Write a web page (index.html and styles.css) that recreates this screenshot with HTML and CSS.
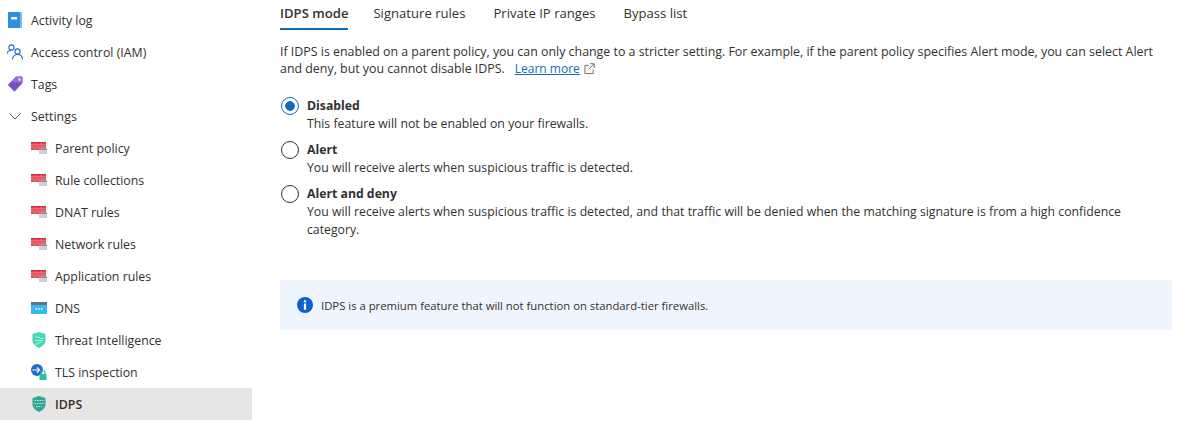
FILE: index.html
```html
<!DOCTYPE html>
<html lang="en">

<head>
    <meta charset="UTF-8">
    <meta name="viewport" content="width=device-width, initial-scale=1.0">
    <title>IDPS</title>
    <link rel="stylesheet" href="styles.css">
</head>

<body>
    <svg class="defs" width="0" height="0">
        <symbol id="firewall" viewBox="0 0 16 12">
            <rect x="0" y="0" width="15" height="8" fill="#e8505c"/>
            <path d="M0 0h15v1.500H0z" fill="#d8323f"/>
            <path d="M0 2.500h15M0 5.200h15M4 0v2.500M10 0v2.500M7 2.500v2.700M12 2.500v2.700M4 5.200v2.800M10 5.200v2.800" stroke="#f7a3aa" stroke-width=".6" stroke-opacity=".55" fill="none"/>
            <rect x="8" y="6.500" width="8" height="5.500" fill="#d0d0d0"/>
            <rect x="8" y="6.500" width="8" height="1.500" fill="#8f8f8f"/>
        </symbol>
    </svg>

    <nav class="sidebar">
        <a class="item">
            <svg class="icon" viewBox="0 0 16 16"><rect x="1" y="0" width="14" height="16" rx="1.500" fill="#79b8ec"/><rect x="1" y="0" width="12" height="16" rx="1" fill="#2f8fdf"/><rect x="4" y="5" width="6" height="2.500" fill="#fff"/></svg>
            <span>Activity log</span>
        </a>
        <a class="item">
            <svg class="icon" viewBox="0 0 16 16" fill="none" stroke="#1a6fd0" stroke-width="1.100"><circle cx="4.500" cy="3.500" r="2.600"/><path d="M0 10c0-2.500 1.500-3.500 4.500-3.500"/><circle cx="10.500" cy="7.500" r="2.600"/><path d="M5.500 15.500c0-3 2-5 5-5s5 2 5 5"/></svg>
            <span>Access control (IAM)</span>
        </a>
        <a class="item">
            <svg class="icon" viewBox="0 0 16 16"><path d="M9 .5h5.500a1 1 0 0 1 1 1v5.500L7.500 15.800 .8 9z" fill="#7b4fc4"/><path d="M9 .5h5.500a1 1 0 0 1 1 1v5.500L4 5.500z" fill="#a27be0" opacity=".8"/><circle cx="12.500" cy="3.500" r="1.300" fill="#e6dcf6"/></svg>
            <span>Tags</span>
        </a>
        <a class="item">
            <svg class="icon chevron" viewBox="0 0 16 16" fill="none" stroke="#555" stroke-width="1"><path d="M2.500 5.500 8 11l5.500-5.500"/></svg>
            <span>Settings</span>
        </a>
        <a class="item sub"><svg class="icon"><use href="#firewall"/></svg><span>Parent policy</span></a>
        <a class="item sub"><svg class="icon"><use href="#firewall"/></svg><span>Rule collections</span></a>
        <a class="item sub"><svg class="icon"><use href="#firewall"/></svg><span>DNAT rules</span></a>
        <a class="item sub"><svg class="icon"><use href="#firewall"/></svg><span>Network rules</span></a>
        <a class="item sub"><svg class="icon"><use href="#firewall"/></svg><span>Application rules</span></a>
        <a class="item sub">
            <svg class="icon" viewBox="0 0 16 12"><rect width="16" height="12" rx=".8" fill="#35b8ee"/><rect width="16" height="3" fill="#5f7482"/><path d="M4.500 7h1.500M7.200 7h1.500M10 7h1.500" stroke="#fff" stroke-width="1.500"/></svg>
            <span>DNS</span>
        </a>
        <a class="item sub">
            <svg class="icon" viewBox="0 0 16 16"><path d="M8 0 14.500 2v6.500c0 3.500-3.500 6-6.500 7.500-3-1.500-6.500-4-6.500-7.500V2z" fill="#46d6b8"/><path d="M4 5h4l1.500 1.500H12M4 8.500h8M4 12h3l2-2h2" stroke="#d9f7f0" stroke-width=".8" fill="none"/></svg>
            <span>Threat Intelligence</span>
        </a>
        <a class="item sub">
            <svg class="icon" viewBox="0 0 16 16"><circle cx="6" cy="6" r="6" fill="#1f6fd0"/><path d="M1.500 6h7M6 3.500 8.500 6 6 8.500" stroke="#fff" stroke-width="1.200" fill="none"/><path d="M10 10V8.500a2 2 0 0 1 4 0V10" stroke="#2cc1a5" stroke-width="1.100" fill="none"/><rect x="8.500" y="10" width="7" height="6" rx=".6" fill="#2cc1a5"/></svg>
            <span>TLS inspection</span>
        </a>
        <a class="item sub selected">
            <svg class="icon" viewBox="0 0 16 16"><path d="M8 0 14.500 2v6.500c0 3.500-3.500 6-6.500 7.500-3-1.500-6.500-4-6.500-7.500V2z" fill="#2fa893"/><path d="M3.500 4.500h9M3.500 7.500h9M5 10.500h6" stroke="#bfe9df" stroke-width="1" stroke-dasharray="1.500 1" fill="none"/></svg>
            <span>IDPS</span>
        </a>
    </nav>

    <main class="content">
        <div class="tabs">
            <a class="tab active">IDPS mode</a>
            <a class="tab">Signature rules</a>
            <a class="tab">Private IP ranges</a>
            <a class="tab">Bypass list</a>
        </div>

        <div class="intro">
            <div>If IDPS is enabled on a parent policy, you can only change to a stricter setting. For example, if the parent policy specifies Alert mode, you can select Alert</div>
            <div class="intro-line">
                <span>and deny, but you cannot disable IDPS.</span>
                <a class="link">Learn more</a>
                <svg class="external" viewBox="0 0 12 12" fill="none" stroke="#555" stroke-width=".9"><path d="M5 2.500H1v9h9V7M6.500 .8h4.700v4.700M11 1 5 7"/></svg>
            </div>
        </div>

        <div class="options">
            <div class="option">
                <span class="radio checked"></span>
                <div>
                    <div class="option-title">Disabled</div>
                    <div class="option-text">This feature will not be enabled on your firewalls.</div>
                </div>
            </div>
            <div class="option">
                <span class="radio"></span>
                <div>
                    <div class="option-title">Alert</div>
                    <div class="option-text">You will receive alerts when suspicious traffic is detected.</div>
                </div>
            </div>
            <div class="option">
                <span class="radio"></span>
                <div>
                    <div class="option-title">Alert and deny</div>
                    <div class="option-text">You will receive alerts when suspicious traffic is detected, and that traffic will be denied when the matching signature is from a high confidence category.</div>
                </div>
            </div>
        </div>

        <div class="banner">
            <svg class="info" viewBox="0 0 16 16"><circle cx="8" cy="8" r="8" fill="#0f5fd0"/><circle cx="8" cy="4.300" r="1.200" fill="#fff"/><rect x="6.900" y="6.500" width="2.200" height="6.200" fill="#fff"/></svg>
            <span>IDPS is a premium feature that will not function on standard-tier firewalls.</span>
        </div>
    </main>
</body>

</html>
```

FILE: styles.css
```css
body {
    font-family: "Open Sans", "Noto Sans", Arial, sans-serif;
    font-size: 12.25px;
    color: #323130;
    background-color: #ffffff;
    display: flex;
    margin: 0;
    height: 423px;
    overflow: hidden;
}

.defs {
    position: absolute;
}

.sidebar {
    width: 252px;
    flex-shrink: 0;
    padding-top: 4px;
    font-size: 12.35px;
}

.item {
    display: flex;
    align-items: center;
    height: 32px;
    padding-left: 7px;
}

.item .icon {
    width: 16px;
    height: 16px;
    margin-right: 8px;
    flex-shrink: 0;
}

.item.sub {
    padding-left: 31px;
}

.item.selected {
    background-color: #e8e6e4;
    font-weight: 600;
}

.content {
    width: 892px;
    margin-left: 28px;
}

.tabs {
    display: flex;
    gap: 25px;
    height: 30px;
}

.tab {
    font-size: 13.1px;
    line-height: 26px;
    height: 30px;
    box-sizing: border-box;
}

.tab + .tab + .tab {
    margin-left: 3px;
}

.tab.active {
    font-weight: 600;
    border-bottom: 2px solid #0f6cbd;
}

.intro {
    margin: 13px 0 0;
    line-height: 17px;
    font-size: 12.4px;
}

.intro-line {
    display: flex;
    align-items: center;
}

.link {
    color: #0f6cbd;
    text-decoration: underline;
    font-size: 12px;
    margin-left: 10px;
}

.external {
    width: 11px;
    height: 11px;
    margin-left: 4px;
}

.options {
    margin-top: 20px;
}

.option {
    display: flex;
    gap: 8px;
    line-height: 18px;
    margin-bottom: 8px;
}

.option-title {
    font-weight: 700;
}

.option-text {
    word-spacing: 0.1px;
}

.radio {
    width: 18px;
    height: 18px;
    box-sizing: border-box;
    border: 1px solid #323130;
    border-radius: 50%;
    margin-left: 1px;
    flex-shrink: 0;
    background-color: #ffffff;
}

.radio.checked {
    border-color: #0f6cbd;
    background: radial-gradient(circle, #0f6cbd 0 4.500px, #ffffff 5px);
}

.banner {
    display: flex;
    align-items: center;
    gap: 8px;
    height: 50px;
    margin-top: 41px;
    padding-left: 17px;
    background-color: #eff5fe;
    border-radius: 2px;
    font-size: 11.3px;
}

.info {
    width: 16px;
    height: 16px;
}
```
